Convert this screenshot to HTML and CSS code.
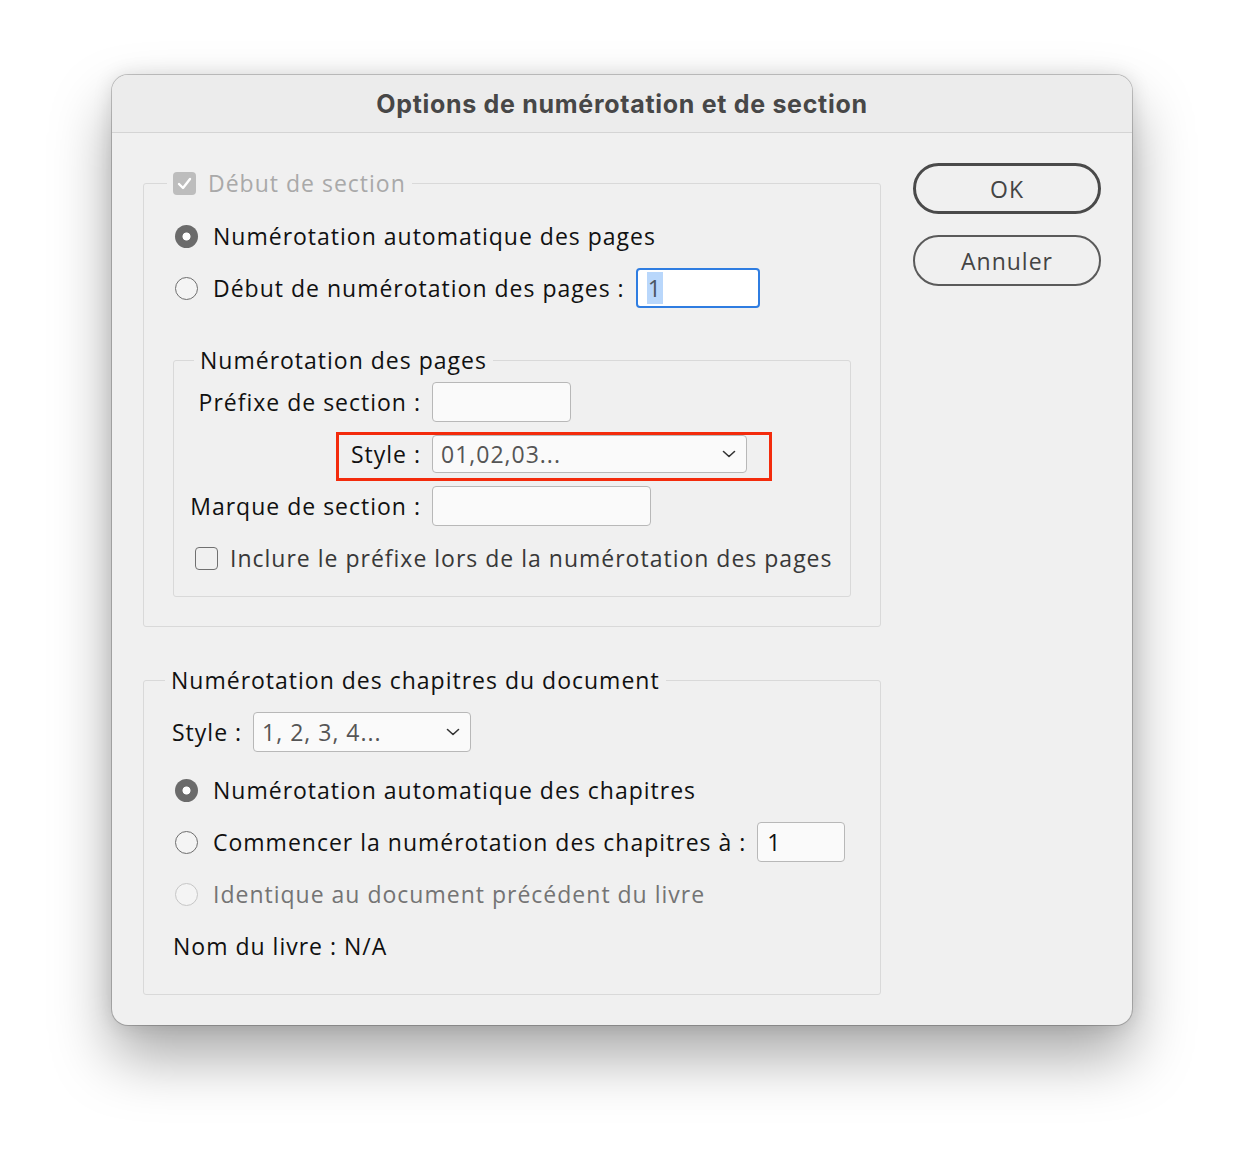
FILE: index.html
```html
<!doctype html>
<html lang="fr">
<head>
  <meta charset="utf-8" />
  <title>Options de numérotation et de section</title>
  <link rel="stylesheet" href="styles.css">
</head>
<body>
  <div class="stage">
    <div class="dialog">
      <div class="titlebar">Options de numérotation et de section</div>

      <div class="content">
        <div class="main">
          <fieldset class="group section">
            <legend>
              <span class="check checked disabled">
                <svg width="15" height="13" viewBox="0 0 15 13"><path d="M2 7 L6 11 L13 2" fill="none" stroke="#fff" stroke-width="2.4" stroke-linecap="round" stroke-linejoin="round"/></svg>
              </span>
              <span class="muted">Début de section</span>
            </legend>
            <div class="row"><span class="radio on"></span>Numérotation automatique des pages</div>
            <div class="row"><span class="radio"></span>Début de numérotation des pages :<span class="field focus start"><span class="selected">1</span></span></div>

            <fieldset class="group pages">
              <legend>Numérotation des pages</legend>
              <div class="form">
                <label>Préfixe de section :</label>
                <span class="field prefix"></span>
                <label>Style :</label>
                <span class="select style-pages">01,02,03...
                  <svg width="14" height="8" viewBox="0 0 14 8"><path d="M1.5 1.5 L7 6.5 L12.5 1.5" fill="none" stroke="#333" stroke-width="1.6" stroke-linecap="round" stroke-linejoin="round"/></svg>
                </span>
                <label>Marque de section :</label>
                <span class="field marker"></span>
                <span class="callout"></span>
              </div>
              <div class="row check-row"><span class="check"></span><span class="soft">Inclure le préfixe lors de la numérotation des pages</span></div>
            </fieldset>
          </fieldset>

          <fieldset class="group chapters">
            <legend>Numérotation des chapitres du document</legend>
            <div class="row style-row">Style :<span class="select style-chapters">1, 2, 3, 4...
              <svg width="14" height="8" viewBox="0 0 14 8"><path d="M1.5 1.5 L7 6.5 L12.5 1.5" fill="none" stroke="#333" stroke-width="1.6" stroke-linecap="round" stroke-linejoin="round"/></svg>
            </span></div>
            <div class="row"><span class="radio on"></span>Numérotation automatique des chapitres</div>
            <div class="row"><span class="radio"></span>Commencer la numérotation des chapitres à :<span class="field chapter-start">1</span></div>
            <div class="row disabled-row"><span class="radio off"></span>Identique au document précédent du livre</div>
            <div class="row book">Nom du livre : N/A</div>
          </fieldset>
        </div>

        <div class="buttons">
          <button class="btn default">OK</button>
          <button class="btn">Annuler</button>
        </div>
      </div>
    </div>
  </div>
</body>
</html>
```

FILE: styles.css
```css
body { margin:0; background:#fff; font-family:"Open Sans", "DejaVu Sans", sans-serif; color:#111; }
.stage { padding:75px 0 0 112px; height:1099px; }

.dialog { width:1020px; height:950px; background:#f0f0f0; border-radius:16px; box-shadow:0 0 0 1px rgba(0,0,0,0.2), 0 32px 60px rgba(0,0,0,0.34), 0 0 20px rgba(0,0,0,0.12); overflow:hidden; }
.titlebar { height:57px; border-bottom:1px solid #d4d4d4; display:flex; align-items:center; justify-content:center; font-family:Inter, "Liberation Sans", sans-serif; font-weight:700; font-size:25px; letter-spacing:0.7px; color:#474747; background:#ececec; }

.content { display:flex; gap:32px; padding:30px 31px 0 31px; }
.main { width:738px; margin-top:5px; }
.buttons { width:188px; display:flex; flex-direction:column; gap:21px; }

.group { margin:0; padding:0; border:1px solid #d9d9d9; border-radius:3px; min-width:0; }
.group legend { height:30px; line-height:30px; padding:0 6px; font-size:23px; letter-spacing:1px; display:flex; align-items:center; }
.section legend { margin-left:23px; }
.section > .row:first-of-type { margin-top:12px; }
.row { height:52px; display:flex; align-items:center; padding-left:31px; font-size:23px; letter-spacing:1px; white-space:nowrap; }
.muted { color:#a9a9a9; }
.soft { color:#383838; }

.radio { width:23px; height:23px; box-sizing:border-box; border:1.6px solid #6e6e6e; border-radius:50%; margin-right:15px; flex:none; background:#f4f4f4; }
.radio.on { border:none; background:radial-gradient(circle, #fff 0 3.6px, #6b6b6b 4.4px); }
.radio.off { border-color:#c6c6c6; }

.check { width:23px; height:23px; box-sizing:border-box; border:1.6px solid #707070; border-radius:4px; flex:none; display:flex; align-items:center; justify-content:center; }
.check.checked { border:none; background:#bdbdbd; margin-right:12px; }

.field { height:40px; box-sizing:border-box; background:#fafafa; border:1.5px solid #b8b8b8; border-radius:4px; display:flex; align-items:center; padding-left:9px; font-size:23px; flex:none; }
.field.focus { border:2px solid #2f7de1; background:#fff; }
.start { width:124px; margin-left:11px; color:#4b5562; }
.selected { background:#b9d7fb; padding:0 1px; }
.prefix { width:139px; }
.marker { width:219px; }
.chapter-start { width:88px; height:40px; margin-left:11px; color:#111; }

.select { height:38px; box-sizing:border-box; background:#fafafa; border:1.5px solid #b8b8b8; border-radius:4px; display:flex; align-items:center; justify-content:space-between; padding:0 10px 0 8px; font-size:23px; color:#555; letter-spacing:1px; }
.style-pages { width:315px; }
.style-chapters { width:218px; height:40px; margin-left:11px; }

.pages { margin:31px 29px 29px 29px; padding-bottom:12px; }
.pages legend { margin-left:20px; }
.form { position:relative; display:grid; grid-template-columns:247px auto; column-gap:11px; grid-auto-rows:52px; align-items:center; justify-items:start; margin-top:1px; }
.form label { justify-self:end; font-size:23px; letter-spacing:1px; white-space:nowrap; }
.callout { position:absolute; left:162px; top:56px; width:436px; height:49px; box-sizing:border-box; border:3.5px solid #f32b0c; }
.check-row { padding-left:21px; }
.check-row .check { margin-right:12px; }

.chapters { margin-top:38px; padding-bottom:22px; }
.chapters legend { margin-left:21px; }
.style-row { padding-left:28px; margin-top:11px; margin-bottom:6px; }
.disabled-row { color:#747474; }
.book { padding-left:29px; }

.btn { height:51px; border-radius:26px; background:#f0f0f0; border:2px solid #5a5a5a; font-family:"Open Sans", "DejaVu Sans", sans-serif; font-size:23px; color:#444; letter-spacing:1px; }
.btn.default { border:3.5px solid #4a4a4a; }
```
